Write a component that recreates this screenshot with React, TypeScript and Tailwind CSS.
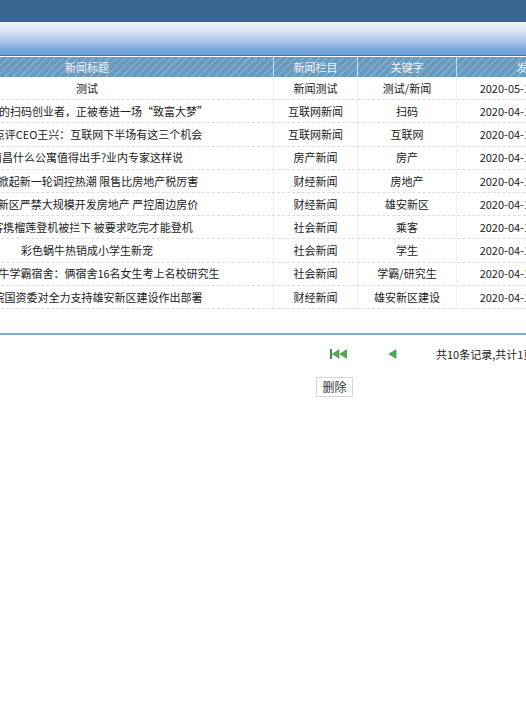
import React from 'react';

const rows = [
  { title: '测试', col: '新闻测试', key: '测试/新闻', date: '2020-05-12 10:21:36' },
  { title: '被淘汰的扫码创业者，正被卷进一场“致富大梦”', col: '互联网新闻', key: '扫码', date: '2020-04-12 16:08:12' },
  { title: '美团点评CEO王兴：互联网下半场有这三个机会', col: '互联网新闻', key: '互联网', date: '2020-04-12 16:06:45' },
  { title: '南昌什么公寓值得出手?业内专家这样说', col: '房产新闻', key: '房产', date: '2020-04-12 16:05:20' },
  { title: '多地掀起新一轮调控热潮 限售比房地产税厉害', col: '财经新闻', key: '房地产', date: '2020-04-12 16:03:58' },
  { title: '雄安新区严禁大规模开发房地产 严控周边房价', col: '财经新闻', key: '雄安新区', date: '2020-04-12 16:02:31' },
  { title: '乘客携榴莲登机被拦下 被要求吃完才能登机', col: '社会新闻', key: '乘客', date: '2020-04-12 16:01:17' },
  { title: '彩色蜗牛热销成小学生新宠', col: '社会新闻', key: '学生', date: '2020-04-12 15:59:44' },
  { title: '某高校最牛学霸宿舍：俩宿舍16名女生考上名校研究生', col: '社会新闻', key: '学霸/研究生', date: '2020-04-12 15:58:09' },
  { title: '国务院国资委对全力支持雄安新区建设作出部署', col: '财经新闻', key: '雄安新区建设', date: '2020-04-12 15:56:52' },
];

function FirstIcon() {
  return (
    <svg width="18" height="10" viewBox="0 0 18 10" className="shrink-0">
      <rect x="0" y="0" width="2" height="10" fill="#3f8f3f" />
      <polygon points="2.5,5 9,0.8 9,9.2" fill="#4caf50" stroke="#2f7d32" strokeWidth="0.6" />
      <polygon points="10,5 16.5,0.8 16.5,9.2" fill="#4caf50" stroke="#2f7d32" strokeWidth="0.6" />
    </svg>
  );
}

function PrevIcon() {
  return (
    <svg width="9" height="10" viewBox="0 0 9 10" className="shrink-0">
      <polygon points="1,5 8,0.8 8,9.2" fill="#4caf50" stroke="#2f7d32" strokeWidth="0.6" />
    </svg>
  );
}

export default function App() {
  return (
    <div
      className="w-[526px] h-[702px] overflow-hidden bg-white text-[11px] text-[#222]"
      style={{ fontFamily: '"Noto Sans CJK SC", "DejaVu Sans", sans-serif' }}
    >
      {/* top bar */}
      <div className="h-[22px] bg-[#3a6693]" />
      <div className="h-[34px] bg-[linear-gradient(to_bottom,#f3f6fb_0%,#dde7f3_25%,#a9c6e8_60%,#76a6da_85%,#6b9fd6_100%)] border-b border-[#3f74b6]" />
      <div className="h-px bg-white" />

      {/* table */}
      <div className="ml-[-99px] w-[760px]">
        <div className="flex h-[20px] items-center text-[#eef4f9] bg-[repeating-linear-gradient(135deg,#6a9bbf_0px,#6a9bbf_4px,#80adcb_4px,#80adcb_5.5px)]">
          <div className="w-[372px] shrink-0 text-center">新闻标题</div>
          <div className="w-[84px] shrink-0 h-full flex items-center justify-center border-l border-[#c9dceb]">新闻栏目</div>
          <div className="w-[99px] shrink-0 h-full flex items-center justify-center border-l border-[#c9dceb]">关键字</div>
          <div className="w-[164px] shrink-0 h-full flex items-center justify-center border-l border-[#c9dceb]">发布时间</div>
        </div>
        {rows.map((r, i) => (
          <div key={i} className="flex h-[23.2px] border-b border-dashed border-[#dcdcdc]">
            <div className="w-[372px] shrink-0 flex items-center justify-center whitespace-pre">{r.title}</div>
            <div className="w-[84px] shrink-0 flex items-center justify-center border-l border-[#eeeeee]">{r.col}</div>
            <div className="w-[99px] shrink-0 flex items-center justify-center border-l border-[#eeeeee]">{r.key}</div>
            <div className="w-[164px] shrink-0 flex items-center justify-center pr-[16px] whitespace-nowrap border-l border-[#eeeeee]">{r.date}</div>
          </div>
        ))}
      </div>

      {/* pagination */}
      <div className="mt-[24px] h-[2px] bg-[#7ea8d8]" />
      <div className="flex items-center h-[38px] pl-[330px] whitespace-nowrap">
        <FirstIcon />
        <div className="ml-[40px] shrink-0 flex">
          <PrevIcon />
        </div>
        <div className="ml-[39px] shrink-0">共10条记录,共计1页,当前第1页</div>
      </div>
      <div className="pl-[316px] mt-[4px]">
        <button className="h-[20px] w-[37px] border border-[#d6d6d6] bg-white text-[12px] text-[#333] leading-none">删除</button>
      </div>
    </div>
  );
}
